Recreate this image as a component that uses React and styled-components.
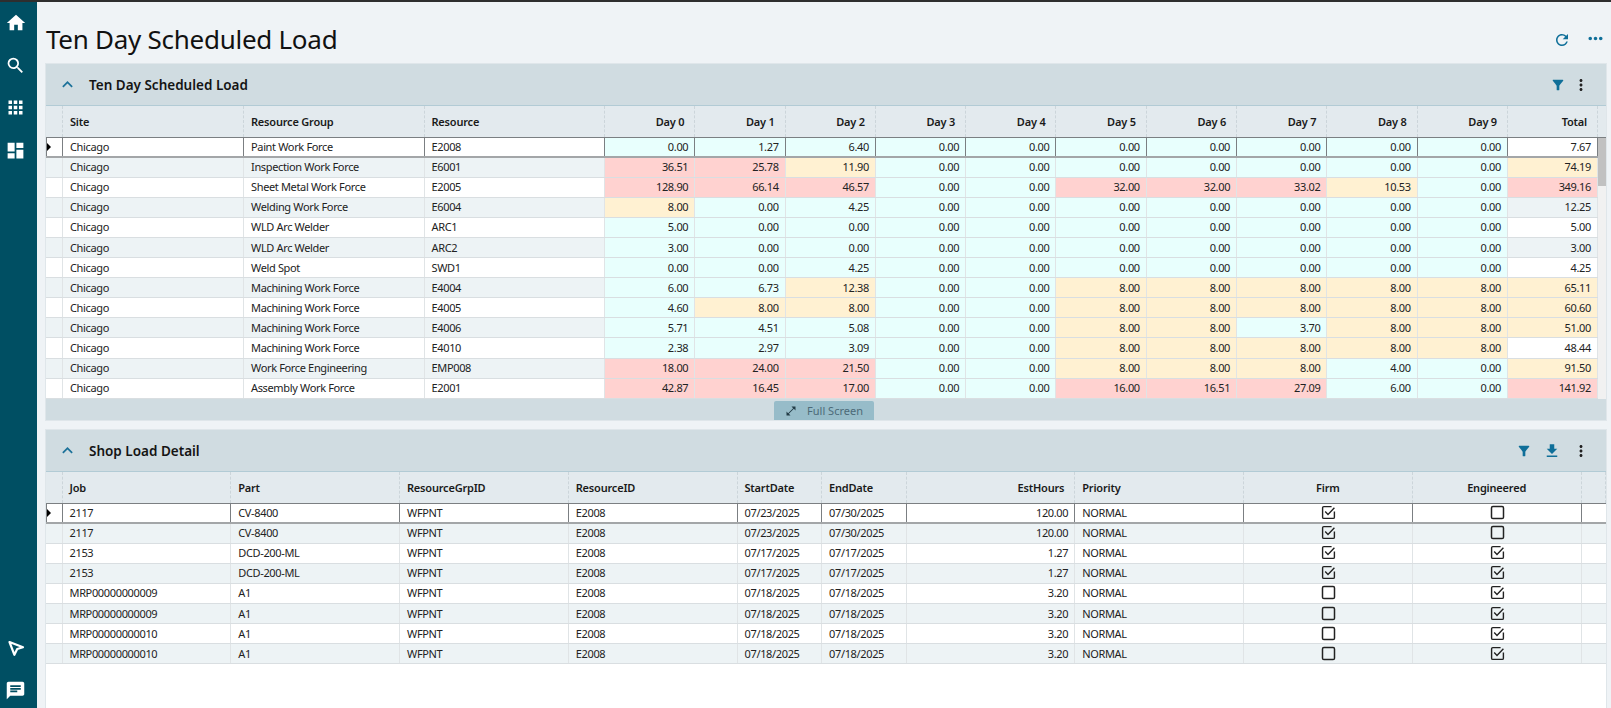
// App.jsx
import React from 'react';
import styled, { createGlobalStyle } from 'styled-components';
import {
  MdHome,
  MdSearch,
  MdApps,
  MdDashboard,
  MdChat,
  MdRefresh,
  MdMoreHoriz,
  MdMoreVert,
  MdFilterAlt,
  MdFileDownload,
  MdExpandLess,
  MdOpenInFull,
} from 'react-icons/md';

const LOAD_COLS = '17px 181px 180.5px 180.5px repeat(10, 90.3px) 90px';
const DETAIL_COLS = '16.5px repeat(4, 168.75px) repeat(2, 84.5px) repeat(4, 168.75px) 1fr';

const DAYS = ['Day 0', 'Day 1', 'Day 2', 'Day 3', 'Day 4', 'Day 5', 'Day 6', 'Day 7', 'Day 8', 'Day 9'];

const LOAD_ROWS = [
  ['Paint Work Force', 'E2008', [0, 1.27, 6.4, 0, 0, 0, 0, 0, 0, 0], 7.67],
  ['Inspection Work Force', 'E6001', [36.51, 25.78, 11.9, 0, 0, 0, 0, 0, 0, 0], 74.19],
  ['Sheet Metal Work Force', 'E2005', [128.9, 66.14, 46.57, 0, 0, 32, 32, 33.02, 10.53, 0], 349.16],
  ['Welding Work Force', 'E6004', [8, 0, 4.25, 0, 0, 0, 0, 0, 0, 0], 12.25],
  ['WLD Arc Welder', 'ARC1', [5, 0, 0, 0, 0, 0, 0, 0, 0, 0], 5],
  ['WLD Arc Welder', 'ARC2', [3, 0, 0, 0, 0, 0, 0, 0, 0, 0], 3],
  ['Weld Spot', 'SWD1', [0, 0, 4.25, 0, 0, 0, 0, 0, 0, 0], 4.25],
  ['Machining Work Force', 'E4004', [6, 6.73, 12.38, 0, 0, 8, 8, 8, 8, 8], 65.11],
  ['Machining Work Force', 'E4005', [4.6, 8, 8, 0, 0, 8, 8, 8, 8, 8], 60.6],
  ['Machining Work Force', 'E4006', [5.71, 4.51, 5.08, 0, 0, 8, 8, 3.7, 8, 8], 51],
  ['Machining Work Force', 'E4010', [2.38, 2.97, 3.09, 0, 0, 8, 8, 8, 8, 8], 48.44],
  ['Work Force Engineering', 'EMP008', [18, 24, 21.5, 0, 0, 8, 8, 8, 4, 0], 91.5],
  ['Assembly Work Force', 'E2001', [42.87, 16.45, 17, 0, 0, 16, 16.51, 27.09, 6, 0], 141.92],
];

const DETAIL_ROWS = [
  ['2117', 'CV-8400', '07/23/2025', '07/30/2025', '120.00', true, false],
  ['2117', 'CV-8400', '07/23/2025', '07/30/2025', '120.00', true, false],
  ['2153', 'DCD-200-ML', '07/17/2025', '07/17/2025', '1.27', true, true],
  ['2153', 'DCD-200-ML', '07/17/2025', '07/17/2025', '1.27', true, true],
  ['MRP00000000009', 'A1', '07/18/2025', '07/18/2025', '3.20', false, true],
  ['MRP00000000009', 'A1', '07/18/2025', '07/18/2025', '3.20', false, true],
  ['MRP00000000010', 'A1', '07/18/2025', '07/18/2025', '3.20', false, true],
  ['MRP00000000010', 'A1', '07/18/2025', '07/18/2025', '3.20', false, true],
];

const dayTone = (v) => (v >= 16 ? 'red' : v >= 8 ? 'amber' : 'mint');
const totalTone = (v) => (v >= 100 ? 'red' : v >= 50 ? 'amber' : undefined);

const TONES = { red: '#ffd2d0', amber: '#fff1d2', mint: '#e8fffd' };

function SendIcon() {
  return (
    <svg width="18" height="18" viewBox="0 0 18 18" fill="none">
      <path d="M2.5 3 L16 8.2 L10.2 10 L7.4 15.8 Z" stroke="#fff" strokeWidth="2.2" strokeLinejoin="round" />
    </svg>
  );
}

function CheckMark({ checked }) {
  return (
    <svg width="15" height="15" viewBox="0 0 15 15" fill="none">
      {checked ? (
        <>
          <path
            d="M10.6 1.6 H2.8 a1.2 1.2 0 0 0 -1.2 1.2 v9.4 a1.2 1.2 0 0 0 1.2 1.2 h9.4 a1.2 1.2 0 0 0 1.2 -1.2 V6.6"
            stroke="#222"
            strokeWidth="1.4"
          />
          <path d="M4.2 6.6 L7 9.4 L13.4 2.8" stroke="#222" strokeWidth="1.4" />
        </>
      ) : (
        <rect x="1.5" y="1.6" width="12" height="12" rx="1.4" stroke="#222" strokeWidth="1.5" />
      )}
    </svg>
  );
}

export default function App() {
  return (
    <>
      <GlobalStyle />
      <TopLine />
      <Shell>
        <SideBar>
          <NavGroup>
            <NavItem><MdHome size={22} /></NavItem>
            <NavItem><MdSearch size={21} /></NavItem>
            <NavItem><MdApps size={21} /></NavItem>
            <NavItem><MdDashboard size={21} /></NavItem>
          </NavGroup>
          <NavGroup>
            <NavItem><SendIcon /></NavItem>
            <NavItem><MdChat size={21} /></NavItem>
          </NavGroup>
        </SideBar>

        <Main>
          <PageHead>
            <PageTitle>Ten Day Scheduled Load</PageTitle>
            <PageTools>
              <RefreshIcon size={18} />
              <MdMoreHoriz size={21} />
            </PageTools>
          </PageHead>

          <Panel>
            <PanelHead>
              <Collapse><MdExpandLess size={21} /></Collapse>
              <PanelTitle>Ten Day Scheduled Load</PanelTitle>
              <PanelTools $gap={6}>
                <MdFilterAlt size={16} />
                <Kebab><MdMoreVert size={18} /></Kebab>
              </PanelTools>
            </PanelHead>

            <HeadRow $cols={LOAD_COLS} $scroll>
              <HeadCell />
              <HeadCell>Site</HeadCell>
              <HeadCell>Resource Group</HeadCell>
              <HeadCell>Resource</HeadCell>
              {DAYS.map((d) => (
                <HeadCell key={d} $align="right">{d}</HeadCell>
              ))}
              <HeadCell $align="right">Total</HeadCell>
            </HeadRow>

            <LoadBody>
              <LoadRows>
                {LOAD_ROWS.map(([group, res, days, total], i) => (
                  <Row key={res} $cols={LOAD_COLS} $odd={i % 2 === 1} $selected={i === 0}>
                    <Cell>{i === 0 && <Pointer />}</Cell>
                    <Cell>Chicago</Cell>
                    <Cell>{group}</Cell>
                    <Cell>{res}</Cell>
                    {days.map((v, d) => (
                      <Cell key={d} $align="right" $tone={dayTone(v)}>{v.toFixed(2)}</Cell>
                    ))}
                    <Cell $align="right" $tone={totalTone(total)}>{total.toFixed(2)}</Cell>
                  </Row>
                ))}
                <Row $cols={LOAD_COLS}>
                  {Array.from({ length: 15 }, (_, i) => <Cell key={i} />)}
                </Row>
              </LoadRows>
              <ScrollTrack>
                <ScrollThumb />
              </ScrollTrack>
            </LoadBody>

            <PanelFoot>
              <FullScreen>
                <MdOpenInFull size={12} />
                Full Screen
              </FullScreen>
            </PanelFoot>
          </Panel>

          <DetailPanel>
            <PanelHead>
              <Collapse><MdExpandLess size={21} /></Collapse>
              <PanelTitle>Shop Load Detail</PanelTitle>
              <PanelTools $gap={11}>
                <MdFilterAlt size={16} />
                <MdFileDownload size={18} />
                <Kebab><MdMoreVert size={18} /></Kebab>
              </PanelTools>
            </PanelHead>

            <HeadRow $cols={DETAIL_COLS}>
              <HeadCell />
              <HeadCell>Job</HeadCell>
              <HeadCell>Part</HeadCell>
              <HeadCell>ResourceGrpID</HeadCell>
              <HeadCell>ResourceID</HeadCell>
              <HeadCell>StartDate</HeadCell>
              <HeadCell>EndDate</HeadCell>
              <HeadCell $align="right">EstHours</HeadCell>
              <HeadCell>Priority</HeadCell>
              <HeadCell $align="center">Firm</HeadCell>
              <HeadCell $align="center">Engineered</HeadCell>
              <HeadCell />
            </HeadRow>

            {DETAIL_ROWS.map(([job, part, start, end, hours, firm, eng], i) => (
              <Row key={i} $cols={DETAIL_COLS} $odd={i % 2 === 1} $selected={i === 0}>
                <Cell>{i === 0 && <Pointer />}</Cell>
                <Cell>{job}</Cell>
                <Cell>{part}</Cell>
                <Cell>WFPNT</Cell>
                <Cell>E2008</Cell>
                <Cell>{start}</Cell>
                <Cell>{end}</Cell>
                <Cell $align="right">{hours}</Cell>
                <Cell>NORMAL</Cell>
                <Cell $align="center"><CheckMark checked={firm} /></Cell>
                <Cell $align="center"><CheckMark checked={eng} /></Cell>
                <Cell $open />
              </Row>
            ))}
          </DetailPanel>
        </Main>
      </Shell>
    </>
  );
}

// styled-components
const GlobalStyle = createGlobalStyle`
  html, body {
    margin: 0;
    height: 100%;
    overflow: hidden;
    background: #eff3f6;
    font-family: "Noto Sans", Lato, sans-serif;
    color: #1c1c1c;
  }
  * {
    box-sizing: border-box;
  }
`;

const TopLine = styled.div`
  height: 2px;
  background: #2e2e2e;
`;

const Shell = styled.div`
  display: flex;
  height: 706px;
`;

const SideBar = styled.nav`
  width: 37px;
  flex: none;
  background: #004f63;
  display: flex;
  flex-direction: column;
  justify-content: space-between;
  padding-top: 3.5px;
`;

const NavGroup = styled.div`
  display: flex;
  flex-direction: column;
  gap: 8px;
`;

const NavItem = styled.div`
  height: 34.5px;
  display: flex;
  align-items: center;
  justify-content: center;
  color: #fff;
  padding-right: 6px;
`;

const Main = styled.main`
  flex: 1;
  min-width: 0;
  display: flex;
  flex-direction: column;
  padding: 0 4px 0 8px;
  gap: 8px;
`;

const PageHead = styled.header`
  height: 61px;
  margin-bottom: -8px;
  flex: none;
  display: flex;
  align-items: center;
  justify-content: space-between;
  padding: 12px 0 0 1px;
`;

const PageTitle = styled.h1`
  margin: 0;
  font-size: 26px;
  font-weight: 400;
  letter-spacing: -0.27px;
  line-height: 38px;
  color: #111;
`;

const PageTools = styled.div`
  display: flex;
  align-items: center;
  gap: 14px;
  color: #0f6f99;
  margin-right: 1px;
`;

const RefreshIcon = styled(MdRefresh)`
  margin-top: 3px;
`;

const Panel = styled.section`
  flex: none;
  height: 358px;
  display: flex;
  flex-direction: column;
  background: #d0dce1;
  border: 1px solid #dfe6ea;
`;

const DetailPanel = styled(Panel)`
  flex: 1;
  height: auto;
  background: #fff;
  border-bottom: 0;
`;

const PanelHead = styled.div`
  height: 42px;
  flex: none;
  display: flex;
  align-items: center;
  background: #d0dce1;
  border-bottom: 1px solid #b2cbd5;
  padding: 0 16px 0 11px;
`;

const Collapse = styled.span`
  display: flex;
  width: 32px;
  color: #1b7199;
`;

const PanelTitle = styled.h2`
  margin: 0;
  flex: 1;
  font-size: 13.5px;
  font-weight: 600;
  color: #141414;
`;

const PanelTools = styled.div`
  display: flex;
  align-items: center;
  gap: ${(p) => p.$gap}px;
  color: #0f6f99;
  margin-right: 1px;
`;

const Kebab = styled.span`
  display: flex;
  color: #222;
  margin-right: -1px;
`;

const HeadRow = styled.div`
  flex: none;
  height: 31.5px;
  display: grid;
  grid-template-columns: ${(p) => p.$cols}${(p) => (p.$scroll ? ' 1fr' : '')};
  background: #e3eaee;
  border-bottom: 1px solid #7b7f82;
`;

const HeadCell = styled.div`
  display: flex;
  align-items: center;
  justify-content: ${(p) => (p.$align === 'right' ? 'flex-end' : p.$align === 'center' ? 'center' : 'flex-start')};
  padding: 0 ${(p) => (p.$align === 'right' ? '10px' : '7px')} 0 7px;
  font-size: 11px;
  font-weight: 600;
  letter-spacing: -0.2px;
  color: #1a1a1a;
  border-right: 1px dashed #ccd5da;
`;

const LoadBody = styled.div`
  flex: none;
  height: 261.5px;
  display: flex;
  background: #fff;
`;

const LoadRows = styled.div`
  width: 1552px;
  overflow: hidden;
`;

const ScrollTrack = styled.div`
  flex: 1;
  background: #f1f1f1;
`;

const ScrollThumb = styled.div`
  height: 48px;
  background: #c1c1c1;
`;

const Row = styled.div`
  height: 20.1px;
  display: grid;
  grid-template-columns: ${(p) => p.$cols};
  background: ${(p) => (p.$odd ? '#edf3f5' : '#fff')};
  border-bottom: ${(p) => (p.$selected ? '2px solid #a3a6a8' : '1px solid #d9dee1')};
  box-shadow: ${(p) => (p.$selected ? 'inset 1px 0 0 #7b7f82' : 'none')};

  & > div {
    border-right-color: ${(p) => (p.$selected ? '#7b7f82' : '#e0e4e6')};
  }
`;

const Cell = styled.div`
  display: flex;
  align-items: center;
  justify-content: ${(p) => (p.$align === 'right' ? 'flex-end' : p.$align === 'center' ? 'center' : 'flex-start')};
  padding: 0 6px 1px 7px;
  font-size: 11px;
  letter-spacing: -0.35px;
  color: #222;
  white-space: nowrap;
  overflow: hidden;
  background: ${(p) => TONES[p.$tone] || 'transparent'};
  border-right: ${(p) => (p.$open ? '0' : '1px solid #e0e4e6')};
  position: relative;
`;

const Pointer = styled.span`
  position: absolute;
  left: 1px;
  top: 5.5px;
  border-left: 4px solid #000;
  border-top: 4px solid transparent;
  border-bottom: 4px solid transparent;
`;

const PanelFoot = styled.div`
  flex: 1;
  display: flex;
  justify-content: center;
  align-items: flex-start;
  padding: 2px 4px 0 0;
`;

const FullScreen = styled.button`
  width: 100px;
  height: 19px;
  display: flex;
  align-items: center;
  justify-content: center;
  gap: 10px;
  padding: 0;
  border: 0;
  border-radius: 2px 2px 0 0;
  background: #97bcc9;
  color: #4c6a78;
  font-family: inherit;
  font-size: 11px;

  svg {
    color: #233c47;
  }
`;
